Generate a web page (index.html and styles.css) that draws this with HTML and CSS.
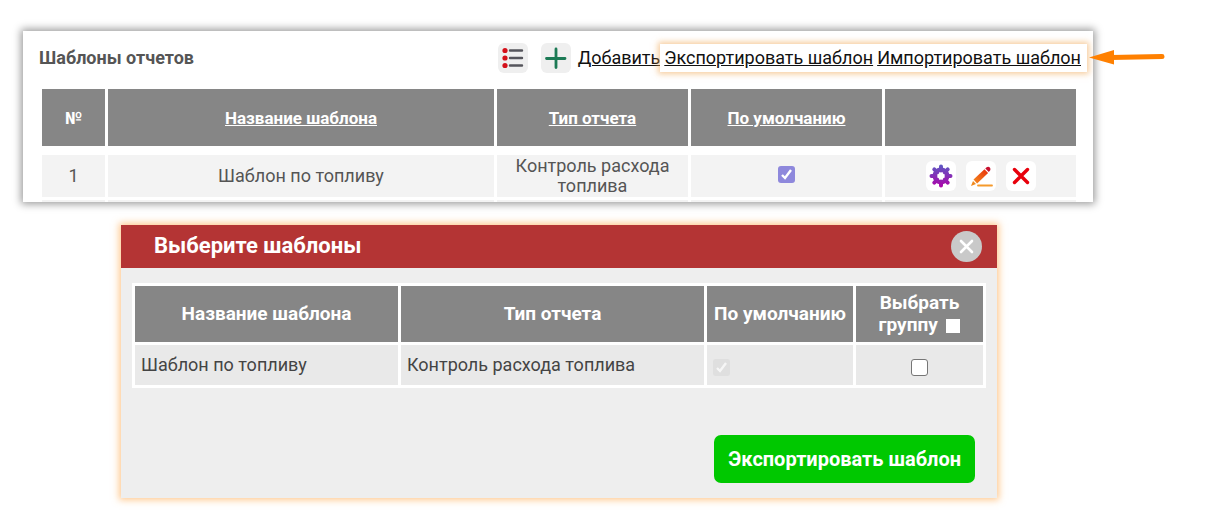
FILE: index.html
```html
<!DOCTYPE html>
<html lang="ru">
<head>
    <meta charset="UTF-8">
    <meta name="viewport" content="width=device-width, initial-scale=1.0">
    <title>Шаблоны отчетов</title>
    <link rel="stylesheet" href="styles.css">
</head>
<body>

    <!-- Templates list -->
    <section class="panel">
        <div class="panel-content">
            <div class="panel-top">
                <h1>Шаблоны отчетов</h1>
                <div class="toolbar">
                    <button type="button" class="icon-btn" aria-label="Список">
                        <svg width="30" height="30" viewBox="0 0 30 30">
                            <path d="M12 7.5h12M12 15h12M12 22.5h12" stroke="#55555c" stroke-width="2.4" stroke-linecap="round"/>
                            <g fill="#d4101a"><circle cx="7" cy="7.5" r="2.6"/><circle cx="7" cy="15" r="2.6"/><circle cx="7" cy="22.5" r="2.6"/></g>
                        </svg>
                    </button>
                    <button type="button" class="icon-btn" aria-label="Новый шаблон">
                        <svg width="30" height="30" viewBox="0 0 30 30">
                            <path d="M15 6v18.500M5.500 15.500h18.500" stroke="#1c7a55" stroke-width="2.800" stroke-linecap="round"/>
                        </svg>
                    </button>
                    <a href="#" class="add-link">Добавить</a>
                    <div class="highlight">
                        <a href="#">Экспортировать шаблон</a>
                        <a href="#">Импортировать шаблон</a>
                    </div>
                </div>
            </div>

            <table class="templates">
                <colgroup>
                    <col class="col-num"><col><col class="col-type"><col class="col-type"><col class="col-type">
                </colgroup>
                <thead>
                    <tr>
                        <th>№</th>
                        <th><a href="#">Название шаблона</a></th>
                        <th><a href="#">Тип отчета</a></th>
                        <th><a href="#">По умолчанию</a></th>
                        <th></th>
                    </tr>
                </thead>
                <tbody>
                    <tr>
                        <td>1</td>
                        <td>Шаблон по топливу</td>
                        <td>Контроль расхода топлива</td>
                        <td><input type="checkbox" class="check check-on" aria-label="По умолчанию" checked></td>
                        <td>
                            <div class="actions">
                                <button type="button" class="action-btn" aria-label="Настройки">
                                    <svg width="30" height="30" viewBox="0 0 30 30">
                                        <defs>
                                            <linearGradient id="gear" x1="0" y1="3" x2="0" y2="27" gradientUnits="userSpaceOnUse">
                                                <stop offset="0" stop-color="#5a5cc4"/>
                                                <stop offset="1" stop-color="#b000a8"/>
                                            </linearGradient>
                                        </defs>
                                        <g stroke="url(#gear)" stroke-width="4" stroke-linecap="round">
                                            <path d="M15 5.500v4M15 20.500v4M5.500 15h4M20.500 15h4M8.300 8.300l3 3M18.700 18.700l3 3M8.300 21.700l3-3M18.700 11.300l3-3"/>
                                        </g>
                                        <circle cx="15" cy="15" r="6.300" fill="none" stroke="url(#gear)" stroke-width="4.200"/>
                                    </svg>
                                </button>
                                <button type="button" class="action-btn" aria-label="Изменить">
                                    <svg width="30" height="30" viewBox="0 0 30 30">
                                        <defs>
                                            <linearGradient id="pencil" x1="20" y1="8" x2="8" y2="22" gradientUnits="userSpaceOnUse">
                                                <stop offset="0" stop-color="#e8320c"/>
                                                <stop offset="1" stop-color="#f58a1e"/>
                                            </linearGradient>
                                        </defs>
                                        <path d="M12 24.500h14" stroke="#f59a2c" stroke-width="1.800" stroke-linecap="round"/>
                                        <path d="M7 20l-2 5 5-2z" fill="#f08a1e"/>
                                        <path d="M7.500 18.500L18.500 8.300l3.600 3.600-11 10.600z" fill="url(#pencil)"/>
                                        <path d="M19.300 7.600l1-1c1.200-1.200 2.700-1 3.500-.2s1 2.400-.2 3.600l-.8 1.100z" fill="#c8102e"/>
                                    </svg>
                                </button>
                                <button type="button" class="action-btn" aria-label="Удалить">
                                    <svg width="30" height="30" viewBox="0 0 30 30">
                                        <path d="M8.500 8.500l13 13M21.500 8.500l-13 13" stroke="#e8000c" stroke-width="3.400" stroke-linecap="round"/>
                                    </svg>
                                </button>
                            </div>
                        </td>
                    </tr>
                    <tr class="next-row"><td></td><td></td><td></td><td></td><td></td></tr>
                </tbody>
            </table>
        </div>

        <svg class="arrow" width="76" height="16" viewBox="0 0 76 16">
            <path d="M22 8.500L73 7.500" stroke="#ff8000" stroke-width="5" stroke-linecap="round"/>
            <path d="M0 8.500L25 1v14.500z" fill="#ff8000"/>
        </svg>
    </section>

    <!-- Export dialog -->
    <section class="dialog">
        <header class="dialog-header">
            <h2>Выберите шаблоны</h2>
            <button type="button" class="close-btn" aria-label="Закрыть">
                <svg width="31" height="31" viewBox="0 0 31 31">
                    <path d="M10 10l11 11M21 10L10 21" stroke="#fff" stroke-width="2.600" stroke-linecap="round"/>
                </svg>
            </button>
        </header>
        <div class="dialog-body">
            <table class="export-table">
                <colgroup>
                    <col class="col-name"><col><col class="col-default"><col class="col-select">
                </colgroup>
                <thead>
                    <tr>
                        <th>Название шаблона</th>
                        <th>Тип отчета</th>
                        <th>По умолчанию</th>
                        <th><label>Выбрать группу <input type="checkbox" class="check-group"></label></th>
                    </tr>
                </thead>
                <tbody>
                    <tr>
                        <td>Шаблон по топливу</td>
                        <td>Контроль расхода топлива</td>
                        <td><input type="checkbox" class="check check-off" aria-label="По умолчанию" checked disabled></td>
                        <td><input type="checkbox" class="check" aria-label="Выбрать шаблон"></td>
                    </tr>
                </tbody>
            </table>
            <button type="button" class="export-btn">Экспортировать шаблон</button>
        </div>
    </section>

</body>
</html>
```
FILE: styles.css
```css
* { box-sizing: border-box; }
body {
    margin: 0;
    min-height: 100vh;
    padding: 31px 133px 14px 23px;
    background-color: #fff;
    color: #555;
    font-family: Roboto, sans-serif;
    font-size: 18px;
    line-height: 20px;
}
h1, h2 { margin: 0; }
button {
    padding: 0;
    border: none;
    font-family: inherit;
    cursor: pointer;
}
svg { display: block; }
table { table-layout: fixed; }

/* --- Templates list --- */
.panel {
    position: relative;
    background-color: #fff;
    box-shadow: 0 0 8px 2px rgba(0, 0, 0, 0.4);
}
.panel-content {
    padding: 12px 14px 0 16px;
    overflow: hidden;
}
.panel-top {
    display: flex;
    justify-content: space-between;
    align-items: center;
    margin-right: -8px;
}
.panel-top h1 {
    font-size: 18px;
    font-weight: 700;
}
.toolbar {
    display: flex;
    align-items: center;
}
.toolbar a { color: #111; }
.icon-btn {
    margin-right: 13px;
    background-color: #efefef;
    border-radius: 6px;
}
.add-link { margin-left: -6px; }
.highlight {
    display: flex;
    gap: 4px;
    padding: 4px 6px 4px 4px;
    background-color: #fff;
    box-shadow: 0 0 6px 2px rgba(240, 170, 90, 0.6);
}
.templates {
    width: 100%;
    margin: 13px 0 -3px;
    border-spacing: 3px;
    text-align: center;
}
.col-num { width: 63px; }
.col-type { width: 191px; }
.templates th {
    height: 63px;
    padding: 0;
    background-color: #868686;
    background-clip: padding-box;
    border-bottom: 6px solid #fff;
    color: #fff;
    font-size: 17px;
}
.templates th a { color: inherit; }
.templates td {
    height: 42px;
    padding: 0 18px;
    background-color: #f3f3f3;
}
.templates .next-row td {
    height: 2px;
    padding: 0;
}
.actions {
    display: flex;
    justify-content: center;
    gap: 10px;
    margin: 0 -18px;
}
.action-btn {
    background-color: #fff;
    border-radius: 6px;
}
.arrow {
    position: absolute;
    top: 18px;
    left: calc(100% - 4px);
}

/* --- Checkboxes --- */
.check {
    appearance: none;
    display: block;
    width: 17px;
    height: 17px;
    margin: 4px auto 0;
    background: #fff center / 17px no-repeat;
    border: 1px solid #767676;
    border-radius: 3px;
}
.check-on,
.check-off {
    border: none;
    background-image: url("data:image/svg+xml,%3Csvg xmlns='http://www.w3.org/2000/svg' viewBox='0 0 17 17'%3E%3Cpath d='M4 9l3 3 6-8' fill='none' stroke='white' stroke-width='2.4'/%3E%3C/svg%3E");
}
.check-on {
    margin: 0 auto 4px;
    background-color: #8e88dc;
}
.check-off {
    margin-left: 0;
    background-color: #d9d9d9;
    opacity: 0.6;
}

/* --- Export dialog --- */
.dialog {
    margin: 23px 96px 0 98px;
    background-color: #eee;
    box-shadow: 0 0 7px 2px rgba(255, 165, 70, 0.6);
}
.dialog-header {
    display: flex;
    justify-content: space-between;
    align-items: center;
    height: 43px;
    padding: 0 15px 0 33px;
    background-color: #b43434;
    color: #fff;
}
.dialog-header h2 {
    padding-bottom: 2px;
    font-size: 22px;
    line-height: 28px;
}
.close-btn {
    background-color: #c9c9c9;
    border-radius: 50%;
}
.dialog-body {
    display: flex;
    flex-direction: column;
    padding: 15px 11px;
}
.export-table {
    width: 100%;
    border-collapse: collapse;
    color: #444;
}
.col-name { width: 266px; }
.col-default { width: 149px; }
.col-select { width: 130px; }
.export-table th,
.export-table td {
    border: 3px solid #fff;
}
.export-table th {
    height: 59px;
    padding: 0 4px;
    background-color: #868686;
    color: #fff;
    font-size: 19px;
    line-height: 22px;
}
.export-table td {
    height: 43px;
    padding: 0 6px;
    background-color: #e9e9e9;
}
.check-group {
    appearance: none;
    width: 14px;
    height: 14px;
    margin: 0 0 0 4px;
    background-color: #fff;
    vertical-align: -2px;
}
.export-btn {
    align-self: flex-end;
    height: 48px;
    margin: 47px 11px 0 0;
    padding: 0 14px;
    background-color: #00c800;
    border-radius: 7px;
    color: #fff;
    font-size: 20px;
    font-weight: 700;
}
```
